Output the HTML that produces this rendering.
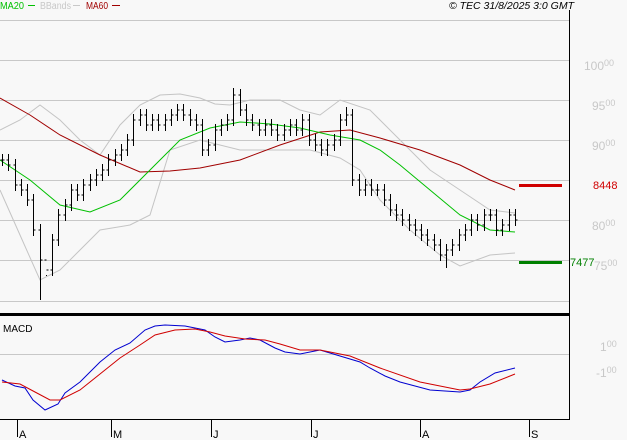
<!DOCTYPE html>
<html><head><meta charset="utf-8"><style>
html,body{margin:0;padding:0;background:#f8f8f8;}
body{width:627px;height:440px;overflow:hidden;font-family:"Liberation Sans",Arial,sans-serif;}
svg{display:block}
</style></head><body>
<svg id="c" width="627" height="440" xmlns="http://www.w3.org/2000/svg" font-family="Liberation Sans, Arial, sans-serif">
<rect width="627" height="440" fill="#f8f8f8"/>
<g stroke="#c8c8c8" stroke-width="1">
<line x1="0" y1="20.5" x2="569" y2="20.5"/>
<line x1="0" y1="60.5" x2="569" y2="60.5"/>
<line x1="0" y1="100.5" x2="569" y2="100.5"/>
<line x1="0" y1="140.5" x2="569" y2="140.5"/>
<line x1="0" y1="180.5" x2="569" y2="180.5"/>
<line x1="0" y1="220.5" x2="569" y2="220.5"/>
<line x1="0" y1="260.5" x2="569" y2="260.5"/>
<line x1="0" y1="301.5" x2="569" y2="301.5"/>
<line x1="0" y1="354.5" x2="569" y2="354.5"/>
</g>
<g fill="#c8c8c8" font-size="12">
<text x="584" y="70">100<tspan font-size="9" dy="-4">00</tspan></text>
<text x="592" y="110">95<tspan font-size="9" dy="-4">00</tspan></text>
<text x="592" y="150">90<tspan font-size="9" dy="-4">00</tspan></text>
<text x="592" y="230">80<tspan font-size="9" dy="-4">00</tspan></text>
<text x="594" y="270">75<tspan font-size="9" dy="-4">00</tspan></text>
<text x="600" y="351">1<tspan font-size="9" dy="-4">00</tspan></text>
<text x="596" y="377">-1<tspan font-size="9" dy="-4">00</tspan></text>
</g>
<polyline fill="none" stroke="#c4c4c4" stroke-width="1" points="0,130 20,120 40,105 60,120 80,140 100,155 120,125 140,105 160,95 180,94 200,98 215,104 230,105 250,100 280,100 300,110 320,115 340,100 370,110 400,140 430,170 460,190 490,210 515,213"/>
<polyline fill="none" stroke="#c4c4c4" stroke-width="1" points="0,190 20,235 40,280 60,270 80,250 100,230 130,225 150,215 170,150 200,140 240,150 280,150 310,150 340,158 360,170 380,200 410,230 440,255 460,266 490,255 515,253"/>
<polyline fill="none" stroke="#a00000" stroke-width="1" points="0,98 30,115 60,135 100,155 140,172 170,171 200,168 240,160 280,145 320,132 350,130 380,138 420,150 460,165 490,180 515,190"/>
<polyline fill="none" stroke="#00c000" stroke-width="1" points="0,160 30,180 60,205 90,212 120,200 150,170 180,140 210,128 240,122 270,124 300,128 330,135 360,140 380,150 400,165 430,190 460,215 490,230 515,232"/>
<g id="bars" stroke="#000" stroke-width="1"></g>
<rect x="519" y="184" width="43" height="3" fill="#d00000"/>
<rect x="519" y="261" width="43" height="3" fill="#008000"/>
<text x="593" y="189" fill="#d00000" font-size="11">8448</text>
<text x="570" y="266" fill="#008000" font-size="11">7477</text>
<polyline fill="none" stroke="#0000d0" stroke-width="1" points="2,380 15,386 25,388 33,400 45,410 58,404 65,393 80,382 100,362 115,350 130,343 145,330 155,326 165,325 185,326 205,330 215,337 225,342 240,340 250,338 260,340 275,348 285,352 300,354 320,350 340,356 360,362 370,368 385,376 400,382 430,390 460,392 470,390 480,382 495,373 515,368"/>
<polyline fill="none" stroke="#d00000" stroke-width="1" points="2,382 20,384 35,392 50,400 60,400 80,390 100,374 120,358 140,345 155,335 175,330 195,329 210,332 225,336 245,339 265,340 280,344 300,350 320,350 350,356 380,368 420,382 460,390 470,389 490,384 515,374"/>
<rect x="0" y="313" width="569" height="3" fill="#000"/>
<line x1="569.5" y1="10" x2="569.5" y2="420" stroke="#000"/>
<line x1="0" y1="419.5" x2="570" y2="419.5" stroke="#000"/>
<g stroke="#000"><line x1="17.5" y1="420" x2="17.5" y2="437"/><line x1="111.5" y1="420" x2="111.5" y2="437"/><line x1="211.5" y1="420" x2="211.5" y2="437"/><line x1="311.5" y1="420" x2="311.5" y2="437"/><line x1="420.5" y1="420" x2="420.5" y2="437"/><line x1="529.5" y1="420" x2="529.5" y2="437"/></g>
<g font-size="11" fill="#000">
<text x="19" y="438">A</text><text x="113" y="438">M</text><text x="213" y="438">J</text><text x="313" y="438">J</text><text x="422" y="438">A</text><text x="531" y="438">S</text>
<text x="3" y="332" font-size="10">MACD</text>
</g>
<g font-size="10">
<text x="0" y="9" fill="#00c000" textLength="24" lengthAdjust="spacingAndGlyphs">MA20</text><line x1="28" y1="5.5" x2="35" y2="5.5" stroke="#00c000"/>
<text x="40" y="9" fill="#c8c8c8" textLength="31" lengthAdjust="spacingAndGlyphs">BBands</text><line x1="73" y1="5.5" x2="80" y2="5.5" stroke="#c8c8c8"/>
<text x="86" y="9" fill="#a00000" textLength="22" lengthAdjust="spacingAndGlyphs">MA60</text><line x1="112" y1="5.5" x2="120" y2="5.5" stroke="#a00000"/>
<text x="449" y="9" fill="#000" font-style="italic" textLength="125" lengthAdjust="spacingAndGlyphs">© TEC 31/8/2025 3:0 GMT</text>
</g>
</svg>
<script>
var c=[160,165,185,190,200,230,260,270,240,215,205,190,195,185,180,175,170,160,155,150,140,120,115,125,120,125,120,115,110,115,120,125,150,145,130,125,120,95,110,120,125,130,125,130,135,130,125,130,120,140,145,150,145,140,120,115,180,190,185,190,190,200,210,215,220,225,230,235,240,245,255,250,245,235,230,220,225,215,215,230,225,215,220];
var g=document.getElementById('bars'),s='';
var low={6:300,7:275,37:88,55:107,71:268};
for(var i=0;i<c.length;i++){var x=Math.round(2+i*(513/(c.length-1)))+.5;var o=i?c[i-1]:c[i];var hi=Math.min(o,c[i])-6,lo=Math.max(o,c[i])+6;if(low[i]){if(low[i]>lo)lo=low[i];else hi=low[i];}
s+='<line x1="'+x+'" y1="'+hi+'" x2="'+x+'" y2="'+lo+'"/><line x1="'+(x-2)+'" y1="'+o+'" x2="'+x+'" y2="'+o+'"/><line x1="'+x+'" y1="'+c[i]+'" x2="'+(x+2)+'" y2="'+c[i]+'"/>';}
g.innerHTML=s;
</script>
</body></html>
